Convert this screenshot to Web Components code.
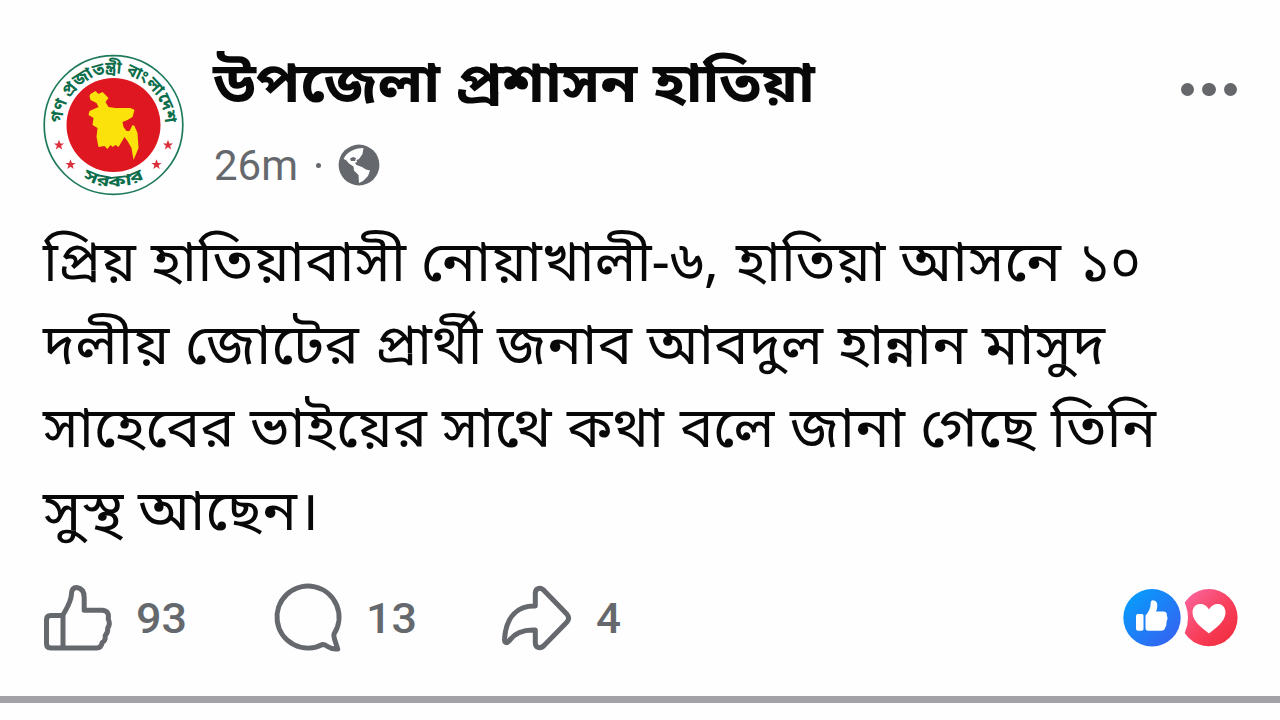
<!DOCTYPE html>
<html lang="bn">
<head>
<meta charset="utf-8">
<title>Post</title>
<style>
html,body{margin:0;background:#fefefe}
body{width:1280px;height:720px;overflow:hidden}
</style>
</head>
<body>
<post-card></post-card>
<script>
const define=(name,html,extra)=>{
  const t=document.createElement('template');t.innerHTML=html;
  customElements.define(name,class extends HTMLElement{
    connectedCallback(){
      if(this.shadowRoot)return;
      this.attachShadow({mode:'open'}).append(t.content.cloneNode(true));
      if(extra)extra(this);
    }
  });
};

/* One line of text, condensed or widened to the width it is given. */
define('text-line',`<style>
:host{display:block;white-space:nowrap}
span{display:inline-block;transform-origin:0 50%}
</style><span><slot></slot></span>`,el=>{
  const s=el.shadowRoot.querySelector('span'),w=+el.getAttribute('width');
  if(w)s.style.transform='scaleX('+w/s.getBoundingClientRect().width+')';
});

/* A line of words: "fit" lists each word's width, "gap" the spaces between. */
define('word-line',`<style>
:host{display:flex;white-space:nowrap}
span{flex:none;transform-origin:0 50%}
</style>`,el=>{
  const fit=el.getAttribute('fit').split(' ').map(Number),gap=el.getAttribute('gap').split(' ').map(Number);
  const spans=el.getAttribute('text').split(' ').map(word=>{
    const s=document.createElement('span');s.textContent=word;el.shadowRoot.append(s);return s;
  });
  const widths=spans.map(s=>s.getBoundingClientRect().width);
  spans.forEach((s,i)=>{
    s.style.transform='scaleX('+fit[i]/widths[i]+')';
    s.style.marginRight=fit[i]-widths[i]+(gap[i]||0)+'px';
  });
});

define('gov-emblem',`<style>
:host{display:block;width:142px;height:142px}
svg{display:block}
text{font-family:"Noto Sans Bengali","Noto Sans",sans-serif;font-weight:700;fill:#0d6e4c}
</style>
<svg width="142" height="142" viewBox="-70.5 -71 142 142">
<defs><path id="top" d="M-51.5 0A51.5 51.5 0 0 1 51.5 0"/><path id="bot" d="M-61.5 0A61.5 61.5 0 0 0 61.5 0"/>
<path id="star" d="M0-5.200L1.400-1.600L5.100-1.600L2.100.8L3.200 4.600L0 2.300L-3.200 4.600L-2.100.8L-5.100-1.600L-1.400-1.600Z"/></defs>
<circle r="69.3" fill="#fff" stroke="#1f7a5c" stroke-width="1.7"/>
<circle r="47" fill="#de1720"/>
<path fill="#fbe20b" d="M-23-31L-18-34L-15-31L-11-33L-7-29L-5-27L-8-23L-5-18L2-17L17-17L21-15L19-8L14-5L9-3L10 2L13 6L16 6L19 0L21 1L24 8L25 23L23 28L20 35L18 23L14 16L11 12L8 17L5 22L2 20L-1 22L-3 20L-6 24L-9 21L-15 22L-17 12L-16 3L-21 0L-20-7L-25-10L-24-14L-15-18L-17-22L-23-25L-24-29Z"/>
<g fill="#d9303b"><use href="#star" x="-54.5" y="20"/><use href="#star" x="-43" y="39.500"/><use href="#star" x="54.500" y="20"/><use href="#star" x="43" y="39.500"/></g>
<text font-size="17" text-anchor="middle"><textPath href="#top" startOffset="50%" textLength="158" lengthAdjust="spacingAndGlyphs">গণ প্রজাতন্ত্রী বাংলাদেশ</textPath></text>
<text font-size="16" text-anchor="middle"><textPath href="#bot" startOffset="50%" textLength="64" lengthAdjust="spacingAndGlyphs">সরকার</textPath></text>
</svg>`);

define('globe-icon',`<style>:host{display:block;width:42px;height:42px}svg{display:block}</style>
<svg width="42" height="42" viewBox="0 0 42 42"><circle cx="21" cy="21" r="20.4" fill="#65686c"/>
<path fill="#fefefe" d="M5.500 15C9 8 16 4 25.500 4L24.500 10L21 15L18.500 16L19 18L17 19L18.500 21L24 23L28 25.500L32 26.500L30 32L25 37L21 39L20.500 31L16 26.500L15.500 22.500L11 19.500L8 16Z"/><path fill="#65686c" d="M12 14.500L15 13L18 14L17 17L13 17Z"/></svg>`);

define('more-dots',`<style>:host{display:flex;gap:8px}i{width:13.300px;height:13.300px;border-radius:50%;background:#65676b}</style><i></i><i></i><i></i>`);

define('post-header',`<style>
:host{display:flex;height:160px;font-family:"Noto Sans Bengali","Noto Sans",sans-serif}
.names{margin-left:28px;flex:1}
.title{font-size:56px;font-weight:700;line-height:68px;height:90px;color:#080809}
.meta{display:flex;align-items:center;height:42px;padding-left:1px;font:400 42px/42px Roboto,sans-serif;color:#65686c}
.meta text-line{position:relative;top:1px}
.dot{width:5px;height:5px;border-radius:50%;background:#65686c;margin:0 17px 0 18px}
more-dots{margin:29px 1px 0 0}
</style>
<gov-emblem></gov-emblem>
<div class="names"><text-line class="title" width="602">উপজেলা প্রশাসন হাতিয়া</text-line>
<div class="meta"><text-line width="84">26m</text-line><span class="dot"></span><globe-icon></globe-icon></div></div>
<more-dots></more-dots>`);

define('post-body',`<style>
:host{display:block;font:400 56px/83px "Noto Sans Bengali","Noto Sans",sans-serif;color:#080809}
</style>
<word-line text="প্রিয় হাতিয়াবাসী নোয়াখালী-৬, হাতিয়া আসনে ১০" fit="93 255 298 149.5 161 62" gap="15 15 17 14.5 17.5"></word-line>
<word-line text="দলীয় জোটের প্রার্থী জনাব আবদুল হান্নান মাসুদ" fit="126.500 174 107.500 135 176 129 123" gap="15 16.500 14.500 15 15 15"></word-line>
<word-line text="সাহেবের ভাইয়ের সাথে কথা বলে জানা গেছে তিনি" fit="191.500 177 109.500 97 94.500 115 116 105" gap="15 15 16 15.500 16 14.500 15"></word-line>
<word-line text="সুস্থ আছেন।" fit="80.500 181" gap="14.500"></word-line>`);

define('post-action',`<style>
:host{display:flex;align-items:center;height:72px;font:500 42px/72px Roboto,sans-serif;color:#65686c}
::slotted(svg){display:block;flex:none}
</style><slot></slot>`);

define('reaction-icons',`<style>:host{display:block}svg{display:block}</style>
<svg width="116" height="60" viewBox="1122 588 116 60">
<defs><linearGradient id="b" x1="0" y1="0" x2="1" y2="1"><stop offset=".1" stop-color="#079cfb"/><stop offset="1" stop-color="#3a5cf0"/></linearGradient>
<linearGradient id="r" x1="0" y1="0" x2="1" y2="1"><stop offset=".05" stop-color="#fb67a0"/><stop offset=".55" stop-color="#f83f5b"/><stop offset="1" stop-color="#ee2837"/></linearGradient></defs>
<circle cx="1209" cy="617.700" r="28.600" fill="url(#r)"/><circle cx="1152" cy="617.700" r="36" fill="#fefefe"/>
<circle cx="1152" cy="617.700" r="28.700" fill="url(#b)"/>
<path fill="#fff" d="M1138 614H1142Q1143.500 614 1143.500 615.500V629Q1143.500 630.700 1142 630.700H1138Q1136 630.700 1136 629V616Q1136 614 1138 614ZM1145.500 615.500Q1150.500 610 1150.700 603.500Q1150.700 600.300 1153 600.300Q1157.300 600.500 1157.300 605.500Q1157.300 608.500 1156 611.500H1164Q1167.300 612 1166.800 615L1167.600 618.500L1166.500 622L1166.300 625.500L1165 628Q1164.500 630.700 1161 630.700H1148Q1145.500 630.700 1145.500 628Z"/>
<path fill="#fff" d="M1209 633.500C1204 629.500 1192.500 621.500 1192.500 612.700C1192.500 606.500 1196.500 604 1200.500 604C1204.500 604 1207.500 606.500 1209 609.500C1210.500 606.500 1213.500 604 1217.500 604C1221.500 604 1225.500 606.500 1225.500 612.700C1225.500 621.500 1214 629.500 1209 633.500Z"/>
</svg>`);

define('post-footer',`<style>
:host{display:flex;align-items:center;height:72px}
.like,.comment{width:229px}
post-action{flex:none}
text-line{position:relative;top:1px}
reaction-icons{margin-left:auto}
svg{fill:none;stroke:#65686c;stroke-width:5;stroke-linejoin:round;stroke-linecap:round}
</style>
<post-action class="like"><svg width="92.500" height="72" viewBox="43.300 581.500 92.500 72"><path d="M63.300 647.500V614.500C68 606 71.500 601 71.700 594Q71.700 587 77 587Q84.500 588 84.500 597V609.800H103Q110 610.500 108.500 618.500Q111 623.500 108 627.500Q108.500 632 105.500 635Q106 640.500 102.500 642Q101.500 647.500 97 647.500ZM63.300 647.500H51Q46.800 647.500 46.800 643V619.500Q46.800 615 51 615H63"/></svg><text-line width="51">93</text-line></post-action>
<post-action class="comment"><svg width="94" height="72" viewBox="273 581 94 72"><path d="M323.500 643.500A31 31 0 1 1 335 633Q334.500 635 335.500 638L338.700 648Q333 648.500 328.500 645.500Q326 643.200 323.500 643.500Z"/></svg><text-line width="51">13</text-line></post-action>
<post-action><svg width="94.500" height="72" viewBox="501.500 581.500 94.500 72"><path d="M535.800 605.500V592.500C536 587 541.500 586.500 545 590.500L567.500 613.800Q570.700 617.500 567.500 621.500L545 644.500C541.500 648.500 536 648 535.800 642.500V629.500C524 629 514.500 633 509.500 640.500C507 643.500 504.500 642 505 638C507 615 519 605 535.800 605.500Z"/></svg><text-line width="25">4</text-line></post-action>
<reaction-icons></reaction-icons>`);

define('post-card',`<style>
:host{display:flex;flex-direction:column;height:720px;background:#fefefe}
main{box-sizing:border-box;height:696px;padding:54px 42px 0 43px}
post-body{height:328px;padding-top:12px}
post-footer{margin-top:28px}
.rule{height:7px;background:#a1a1a6}
</style>
<main><post-header></post-header><post-body></post-body><post-footer></post-footer></main><div class="rule"></div>`);
</script>
</body>
</html>
